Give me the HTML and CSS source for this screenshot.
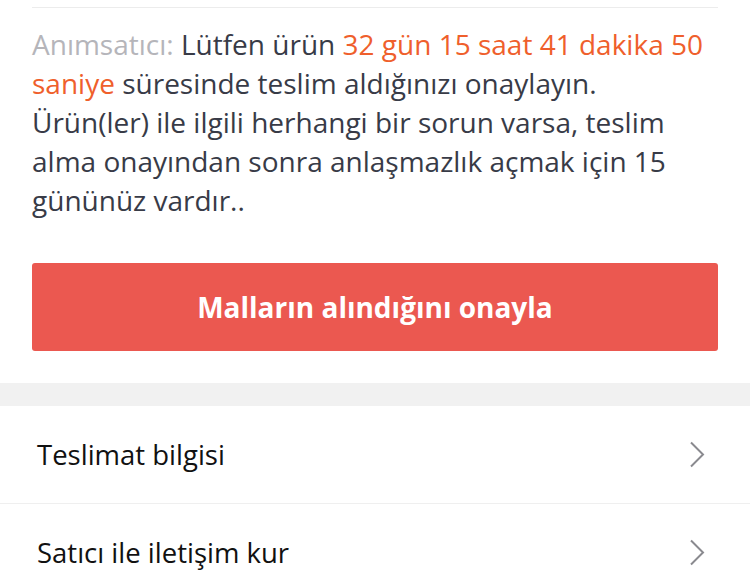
FILE: index.html
```html
<!DOCTYPE html>
<html lang="tr">
<head>
<meta charset="utf-8">
<link rel="stylesheet" href="styles.css">
</head>
<body>
<div class="card">
  <div class="top-rule"></div>
  <p class="notice"><span class="muted">Anımsatıcı:</span> Lütfen ürün <span class="hl">32 gün 15 saat 41 dakika 50 saniye</span> süresinde teslim aldığınızı onaylayın. Ürün(ler) ile ilgili herhangi bir sorun varsa, teslim alma onayından sonra anlaşmazlık açmak için 15 gününüz vardır..</p>
  <button class="confirm">Malların alındığını onayla</button>
</div>
<div class="band"></div>
<ul class="menu">
  <li class="row"><span>Teslimat bilgisi</span>
    <svg class="chev" viewBox="0 0 16 27" width="16" height="27"><path d="M2 1.5 L14 13.5 L2 25.5" fill="none" stroke="#8a8a8f" stroke-width="2"/></svg>
  </li>
  <li class="row"><span>Satıcı ile iletişim kur</span>
    <svg class="chev" viewBox="0 0 16 27" width="16" height="27"><path d="M2 1.5 L14 13.5 L2 25.5" fill="none" stroke="#8a8a8f" stroke-width="2"/></svg>
  </li>
</ul>
</body>
</html>
```
FILE: styles.css
```css
html, body {
  margin: 0;
  padding: 0;
  background: #fff;
}
body {
  font-family: "Open Sans", "Noto Sans", sans-serif;
  width: 750px;
  overflow: hidden;
}
.card {
  padding: 0 32px 32px;
}
.top-rule {
  height: 7px;
  border-bottom: 1px solid #ececec;
}
.notice {
  margin: 17px 0 0;
  font-size: 28px;
  line-height: 39px;
  color: #383b47;
}
.muted { color: #b5b5ba; }
.hl { color: #ef5f2c; }
.confirm {
  display: block;
  width: 100%;
  height: 88px;
  margin-top: 43px;
  border: 0;
  border-radius: 3px;
  background: #eb5850;
  color: #fff;
  font-family: "Open Sans", "Noto Sans", sans-serif;
  font-weight: 700;
  font-size: 28px;
  padding: 0;
}
.band {
  height: 23px;
  background: #f1f1f1;
}
.menu {
  list-style: none;
  margin: 0;
  padding: 0;
}
.row {
  display: flex;
  align-items: center;
  justify-content: space-between;
  height: 97px;
  padding: 0 45px 0 37px;
  border-bottom: 1px solid #efefef;
  font-size: 27.5px;
  color: #111;
}
.chev { display: block; }
```
